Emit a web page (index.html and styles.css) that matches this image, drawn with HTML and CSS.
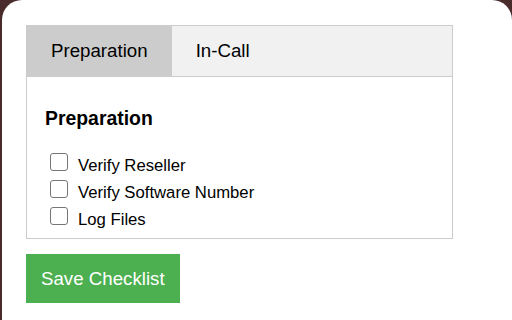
FILE: index.html
```html
<!DOCTYPE html>
<html>
<head>
<meta charset="utf-8">
<link rel="stylesheet" href="styles.css">
</head>
<body>
<div class="card">
  <div class="tabs">
    <div class="tabbar">
      <button class="tab active">Preparation</button>
      <button class="tab">In-Call</button>
    </div>
    <div class="content">
      <h3 class="heading">Preparation</h3>
      <label class="row"><input type="checkbox" class="box">Verify Reseller</label>
      <label class="row"><input type="checkbox" class="box">Verify Software Number</label>
      <label class="row"><input type="checkbox" class="box">Log Files</label>
    </div>
  </div>
  <button class="save">Save Checklist</button>
</div>
</body>
</html>
```
FILE: styles.css
```css
html, body {
  margin: 0;
  padding: 0;
}
body {
  background: #4a2b2c;
  width: 512px;
  height: 320px;
  overflow: hidden;
  font-family: "Liberation Sans", Arial, sans-serif;
  color: #000;
}
.card {
  margin-left: 2px;
  width: 510px;
  height: 320px;
  background: #fff;
  border-radius: 20px 20px 0 0;
  padding: 25px 0 0 24px;
  box-sizing: border-box;
}
.tabs {
  width: 427px;
  border: 1px solid #ccc;
  box-sizing: border-box;
}
.tabbar {
  display: flex;
  background: #f1f1f1;
  border-bottom: 1px solid #ccc;
}
.tab {
  border: none;
  margin: 0;
  background: transparent;
  font-family: "Liberation Sans", Arial, sans-serif;
  font-size: 18.7px;
  line-height: 22px;
  padding: 14px 24px;
  color: #000;
}
.tab.active {
  background: #ccc;
}
.content {
  padding: 0 18px 5px;
}
.heading {
  font-size: 19.4px;
  font-weight: bold;
  line-height: 22px;
  margin: 30px 0 23px;
}
.row {
  display: block;
  font-size: 16.7px;
  line-height: 27px;
}
.box {
  -webkit-appearance: none;
  appearance: none;
  display: inline-block;
  vertical-align: baseline;
  width: 18px;
  height: 18px;
  box-sizing: border-box;
  border: 1.5px solid #767676;
  border-radius: 3px;
  background: #fff;
  margin: 0 10px 0 5px;
}
.save {
  display: block;
  margin-top: 15px;
  border: none;
  background: #4caf50;
  color: #fff;
  font-family: "Liberation Sans", Arial, sans-serif;
  font-size: 18.7px;
  line-height: 21px;
  padding: 14px 15px;
}
```
